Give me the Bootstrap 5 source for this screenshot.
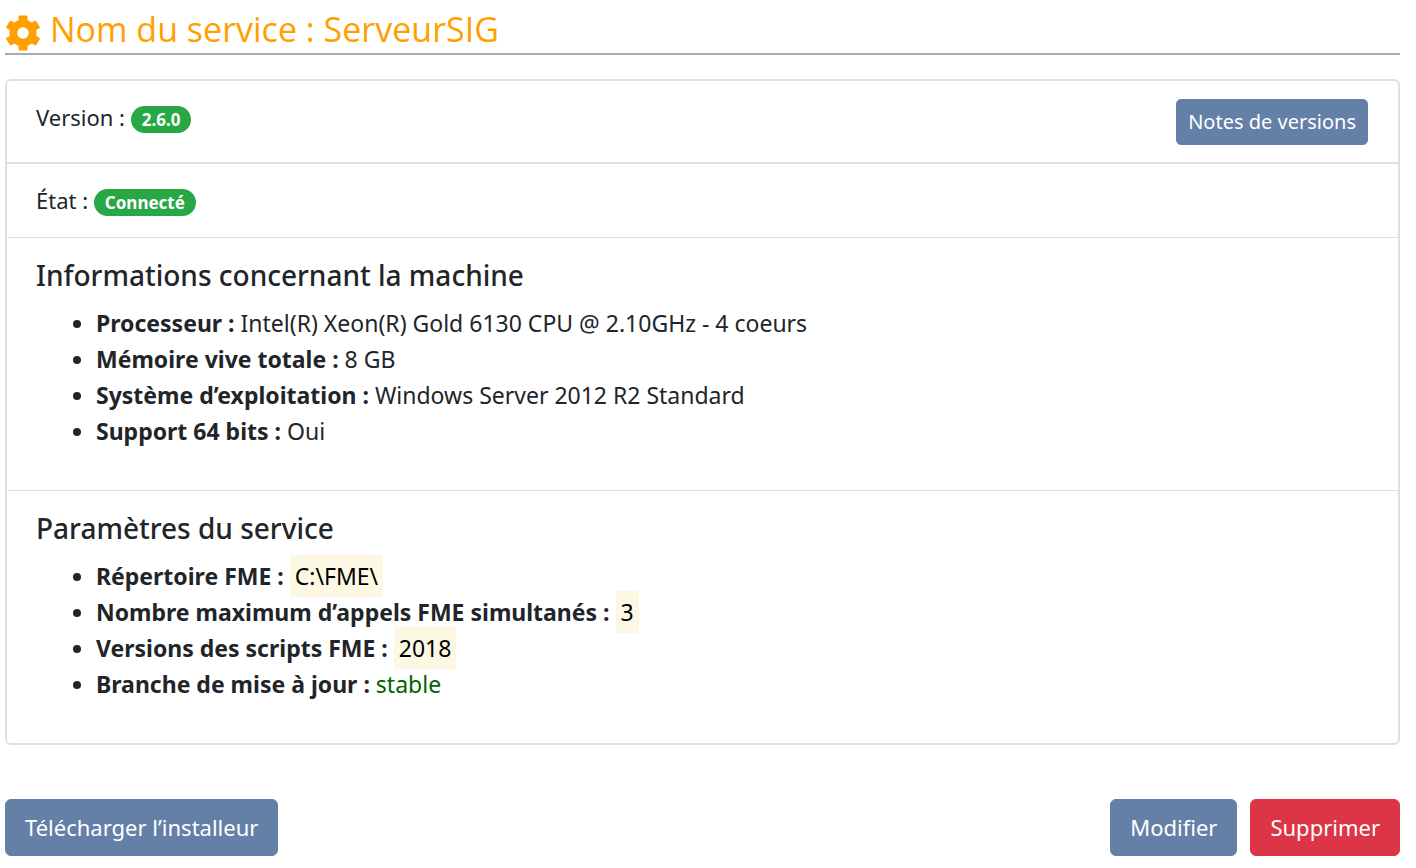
<!DOCTYPE html>
<html lang="fr">
<head>
<meta charset="utf-8">
<meta name="viewport" content="width=device-width, initial-scale=1">
<title>Nom du service : ServeurSIG</title>
<link href="https://cdn.jsdelivr.net/npm/bootstrap@5.3.0/dist/css/bootstrap.min.css" rel="stylesheet">
<style>
  body {
    font-family: "Segoe UI", "Noto Sans", "Open Sans", sans-serif;
    font-size: 22px;
    line-height: 36px;
    color: #212529;
  }
  .page { padding: 8px 16px 12px 5px; }
  .page-title {
    font-family: "Segoe UI", "Open Sans", "Noto Sans", sans-serif;
    font-size: 34px;
    font-weight: 400;
    line-height: 42px;
    color: #ff9f00;
    padding-bottom: 2px;
    border-bottom: 2px solid #a9a9a9;
    margin-bottom: 24px;
    gap: 9px;
  }
  .page-title svg { width: 36px; height: 36px; margin-top: 7px; }
  .service-card {
    --bs-card-border-width: 2px;
    --bs-card-border-color: #dfdfdf;
    --bs-card-border-radius: 6px;
    --bs-card-inner-border-radius: 4px;
    margin-bottom: 54px;
  }
  .service-card > .card-header {
    background: #fff;
    padding: 18px 30px 17px 29px;
    border-bottom: 2px solid #dfdfdf;
  }
  .service-card .list-group-item {
    padding: 18px 30px 19px 29px;
    border-color: #dfdfdf;
    color: inherit;
  }
  .service-card .info-item { padding: 19px 30px 41px 29px; }
  .info-item h2 { font-size: 28px; font-weight: 500; line-height: 36px; margin-bottom: 12px; }
  .info-item ul { font-size: 23px; padding-left: 60px; list-style: disc; }
  .info-item strong { font-weight: 700; }
  .state-pill {
    font-size: 17px;
    font-weight: 700;
    line-height: 17px;
    padding: 5px 11px;
    background: #28a745;
  }
  .param-value { background: #fcf8e3; color: #000; padding: 5px; }
  .branch { color: #006400; }
  .btn-steel {
    --bs-btn-color: #fff;
    --bs-btn-bg: #6480a7;
    --bs-btn-border-color: #6480a7;
    --bs-btn-hover-color: #fff;
    --bs-btn-hover-bg: #536e94;
    --bs-btn-hover-border-color: #536e94;
  }
  .btn-notes { --bs-btn-border-radius: 5px; font-size: 20px; line-height: 32px; padding: 6px 11px; }
  .btn-action { --bs-btn-border-radius: 6px; font-size: 22px; line-height: 35px; padding: 10px 19px; border-width: 1px; }
  .action-gap { gap: 13px; }
</style>
</head>
<body>
<main class="page">
  <h1 class="page-title d-flex">
    <svg viewBox="0 0 36 36" aria-hidden="true">
      <path fill="#ff9f00" fill-rule="evenodd" d="M13.500 1.700Q13.500 .5 14.700 .5H21.300Q22.500 .5 22.500 1.700V5.200Q24.800 6 26.700 7.500L29.800 5.800Q30.700 5.400 31.300 6.200L34.700 11.800Q35.200 12.700 34.400 13.200L31.300 15Q31.800 18 31.300 21L34.400 22.800Q35.200 23.300 34.700 24.200L31.300 29.800Q30.700 30.600 29.800 30.200L26.700 28.500Q24.800 30 22.500 30.800V34.300Q22.500 35.500 21.300 35.500H14.700Q13.500 35.500 13.500 34.300V30.800Q11.200 30 9.300 28.500L6.200 30.200Q5.300 30.600 4.700 29.800L1.300 24.200Q.8 23.300 1.600 22.800L4.700 21Q4.200 18 4.700 15L1.600 13.200Q.8 12.700 1.300 11.800L4.700 6.200Q5.300 5.400 6.200 5.800L9.300 7.500Q11.200 6 13.500 5.200ZM18 12.200A5.800 5.800 0 1 0 18 23.800A5.800 5.800 0 1 0 18 12.200Z"/>
    </svg>
    <span>Nom du service : ServeurSIG</span>
  </h1>

  <section class="card service-card">
    <div class="card-header d-flex justify-content-between">
      <div>Version : <span class="badge rounded-pill state-pill">2.6.0</span></div>
      <button type="button" class="btn btn-steel btn-notes">Notes de versions</button>
    </div>
    <ul class="list-group list-group-flush">
      <li class="list-group-item">État : <span class="badge rounded-pill state-pill">Connecté</span></li>
      <li class="list-group-item info-item">
        <h2>Informations concernant la machine</h2>
        <ul class="mb-0">
          <li><strong>Processeur :</strong> Intel(R) Xeon(R) Gold 6130 CPU @ 2.10GHz - 4 coeurs</li>
          <li><strong>Mémoire vive totale :</strong> 8 GB</li>
          <li><strong>Système d’exploitation :</strong> Windows Server 2012 R2 Standard</li>
          <li><strong>Support 64 bits :</strong> Oui</li>
        </ul>
      </li>
      <li class="list-group-item info-item">
        <h2>Paramètres du service</h2>
        <ul class="mb-0">
          <li><strong>Répertoire FME :</strong> <span class="param-value">C:\FME\</span></li>
          <li><strong>Nombre maximum d’appels FME simultanés :</strong> <span class="param-value">3</span></li>
          <li><strong>Versions des scripts FME :</strong> <span class="param-value">2018</span></li>
          <li><strong>Branche de mise à jour :</strong> <span class="branch">stable</span></li>
        </ul>
      </li>
    </ul>
  </section>

  <div class="d-flex justify-content-between">
    <button type="button" class="btn btn-steel btn-action">Télécharger l’installeur</button>
    <div class="d-flex action-gap">
      <button type="button" class="btn btn-steel btn-action">Modifier</button>
      <button type="button" class="btn btn-danger btn-action">Supprimer</button>
    </div>
  </div>
</main>
<script src="https://cdn.jsdelivr.net/npm/bootstrap@5.3.0/dist/js/bootstrap.bundle.min.js"></script>
</body>
</html>
